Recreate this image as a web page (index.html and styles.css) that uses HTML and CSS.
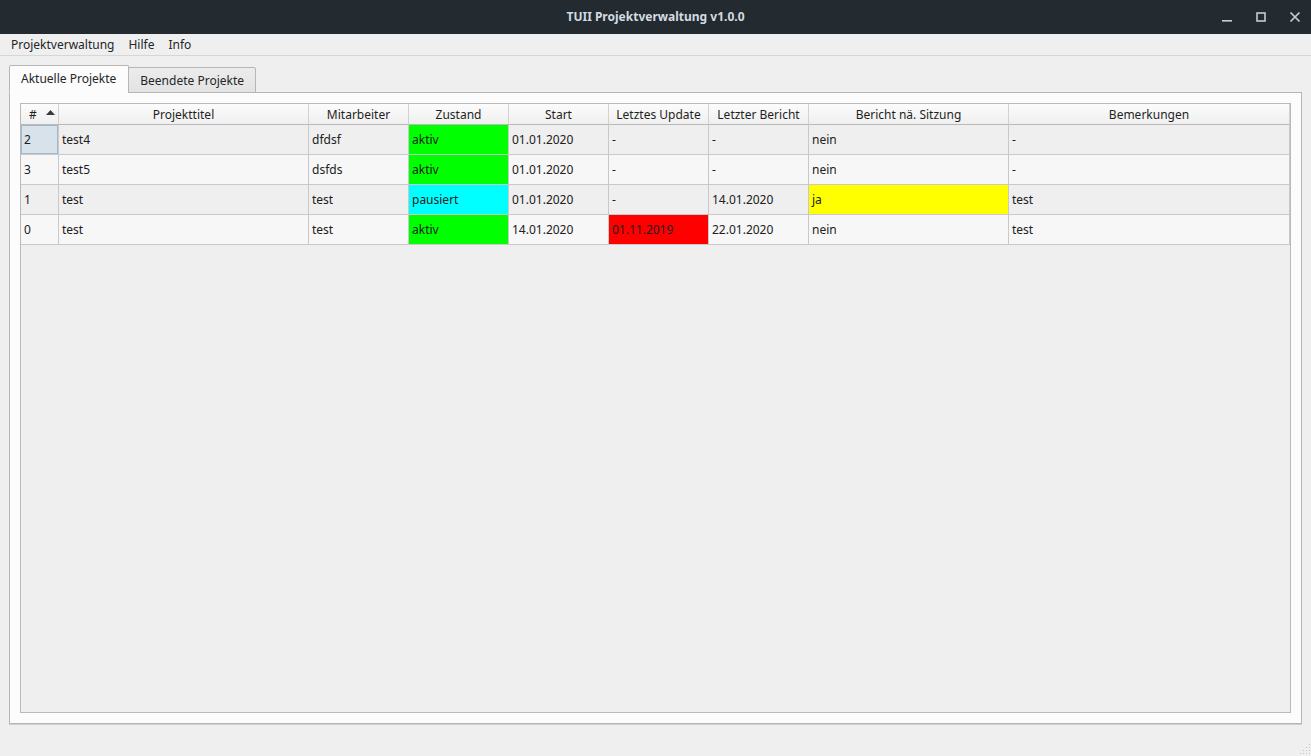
FILE: index.html
```html
<!DOCTYPE html>
<html lang="de">
<head>
<meta charset="utf-8">
<title>TUII Projektverwaltung v1.0.0</title>
<link rel="stylesheet" href="styles.css">
</head>
<body>
<div class="window">
  <header class="titlebar">
    <div class="title">TUII Projektverwaltung v1.0.0</div>
    <div class="winbtns">
      <svg class="wb" width="14" height="14" viewBox="0 0 14 14"><rect x="2" y="10" width="10" height="1.6" fill="#c5cdd3"/></svg>
      <svg class="wb" width="14" height="14" viewBox="0 0 14 14"><rect x="3" y="3" width="8" height="8" fill="none" stroke="#c5cdd3" stroke-width="1.6"/></svg>
      <svg class="wb" width="14" height="14" viewBox="0 0 14 14"><path d="M2.5 2.5 L11.5 11.5 M11.5 2.5 L2.5 11.5" stroke="#c5cdd3" stroke-width="1.7"/></svg>
    </div>
  </header>
  <nav class="menubar">
    <span class="menu-item">Projektverwaltung</span>
    <span class="menu-item">Hilfe</span>
    <span class="menu-item">Info</span>
  </nav>
  <main class="content">
    <div class="tabs">
      <div class="tab active">Aktuelle Projekte</div>
      <div class="tab">Beendete Projekte</div>
    </div>
    <section class="panel">
      <div class="table">
        <div class="hdr"><span>#</span><svg class="sort" width="9" height="5" viewBox="0 0 9 5"><path d="M0 5 L4.5 0 L9 5Z" fill="#3a3a3a"/></svg></div>
        <div class="hdr">Projekttitel</div>
        <div class="hdr">Mitarbeiter</div>
        <div class="hdr">Zustand</div>
        <div class="hdr">Start</div>
        <div class="hdr">Letztes Update</div>
        <div class="hdr">Letzter Bericht</div>
        <div class="hdr">Bericht nä. Sitzung</div>
        <div class="hdr">Bemerkungen</div>

        <div class="c odd sel">2</div>
        <div class="c odd">test4</div>
        <div class="c odd">dfdsf</div>
        <div class="c green">aktiv</div>
        <div class="c odd">01.01.2020</div>
        <div class="c odd">-</div>
        <div class="c odd">-</div>
        <div class="c odd">nein</div>
        <div class="c odd">-</div>

        <div class="c even">3</div>
        <div class="c even">test5</div>
        <div class="c even">dsfds</div>
        <div class="c green">aktiv</div>
        <div class="c even">01.01.2020</div>
        <div class="c even">-</div>
        <div class="c even">-</div>
        <div class="c even">nein</div>
        <div class="c even">-</div>

        <div class="c odd">1</div>
        <div class="c odd">test</div>
        <div class="c odd">test</div>
        <div class="c cyan">pausiert</div>
        <div class="c odd">01.01.2020</div>
        <div class="c odd">-</div>
        <div class="c odd">14.01.2020</div>
        <div class="c yellow">ja</div>
        <div class="c odd">test</div>

        <div class="c even">0</div>
        <div class="c even">test</div>
        <div class="c even">test</div>
        <div class="c green">aktiv</div>
        <div class="c even">14.01.2020</div>
        <div class="c red">01.11.2019</div>
        <div class="c even">22.01.2020</div>
        <div class="c even">nein</div>
        <div class="c even">test</div>
      </div>
    </section>
  </main>
  <svg class="grip" width="12" height="12" viewBox="0 0 12 12">
    <g fill="#c3c3c3">
      <rect x="10" y="1" width="1" height="1"/>
      <rect x="7" y="4" width="1" height="1"/><rect x="10" y="4" width="1" height="1"/>
      <rect x="4" y="7" width="1" height="1"/><rect x="7" y="7" width="1" height="1"/><rect x="10" y="7" width="1" height="1"/>
      <rect x="1" y="10" width="1" height="1"/><rect x="4" y="10" width="1" height="1"/><rect x="7" y="10" width="1" height="1"/><rect x="10" y="10" width="1" height="1"/>
    </g>
  </svg>
</div>
</body>
</html>
```

FILE: styles.css
```css
* { box-sizing: border-box; }
html, body { margin: 0; padding: 0; }
body {
  font-family: "Noto Sans", "DejaVu Sans", sans-serif;
  font-size: 12px;
  color: #232627;
  background: #efefef;
  width: 1311px;
  height: 756px;
  overflow: hidden;
}
.window {
  position: relative;
  width: 1311px;
  height: 756px;
  display: flex;
  flex-direction: column;
}
.titlebar {
  height: 34px;
  background: #232b30;
  display: flex;
  align-items: center;
  justify-content: center;
  position: relative;
  flex: none;
}
.title {
  color: #d3dbe1;
  font-weight: bold;
  font-size: 12px;
  margin-top: -1px;
}
.winbtns {
  position: absolute;
  right: 9px;
  top: 10px;
  display: flex;
  gap: 20px;
}
.wb { display: block; }
.menubar {
  height: 22px;
  flex: none;
  display: flex;
  align-items: center;
  padding-left: 4px;
  padding-bottom: 1px;
  border-bottom: 1px solid #d6d6d6;
}
.menu-item {
  padding: 0 7px;
}
.content {
  flex: 1;
  display: flex;
  flex-direction: column;
  padding: 9px 9px 32px 9px;
}
.tabs {
  display: flex;
  align-items: flex-end;
  height: 28px;
  flex: none;
  position: relative;
  z-index: 1;
  margin-bottom: -1px;
}
.tab {
  height: 26px;
  border: 1px solid #b6b6b6;
  border-radius: 2px 2px 0 0;
  background: linear-gradient(#ececec, #e3e3e3);
  padding: 0 11px 0 11px;
  display: flex;
  align-items: center;
  margin-left: -1px;
}
.tab.active {
  height: 28px;
  background: #fcfcfc;
  border-bottom-color: #fcfcfc;
  margin-left: 0;
  padding: 0 12px 2px 11px;
}
.panel {
  flex: 1;
  border: 1px solid #b6b6b6;
  background: #fcfcfc;
  padding: 10px;
  display: flex;
  box-shadow: 0 1px 0 #cfcfcf;
}
.table {
  flex: 1;
  border: 1px solid #b9b9b9;
  background: #efefef;
  display: grid;
  grid-template-columns: 38px 250px 100px 100px 100px 100px 100px 200px 281px;
  grid-auto-rows: 30px;
  grid-template-rows: 21px;
  align-content: start;
}
.hdr {
  background: linear-gradient(#fcfcfc, #efefef);
  border-right: 1px solid #d2d2d2;
  border-bottom: 1px solid #b9b9b9;
  display: flex;
  align-items: center;
  justify-content: center;
  color: #1f1f1f;
  white-space: nowrap;
}
.hdr:first-child {
  justify-content: flex-start;
  padding-left: 8px;
  gap: 9px;
}
.sort { display: block; margin-top: -3px; }
.c {
  border-right: 1px solid #c9c9c9;
  border-bottom: 1px solid #c9c9c9;
  display: flex;
  align-items: center;
  padding-left: 3px;
  padding-bottom: 1px;
  white-space: nowrap;
  color: #202020;
}
.odd { background: #efefef; }
.even { background: #f7f7f7; }
.green { background: #00ff00; }
.cyan { background: #00ffff; }
.yellow { background: #ffff00; }
.red { background: #ff0000; }
.sel {
  background: #d8e2eb;
  box-shadow: inset 0 0 0 1px #a6b7c7;
}
.grip {
  position: absolute;
  right: 0;
  bottom: 1px;
}
```
